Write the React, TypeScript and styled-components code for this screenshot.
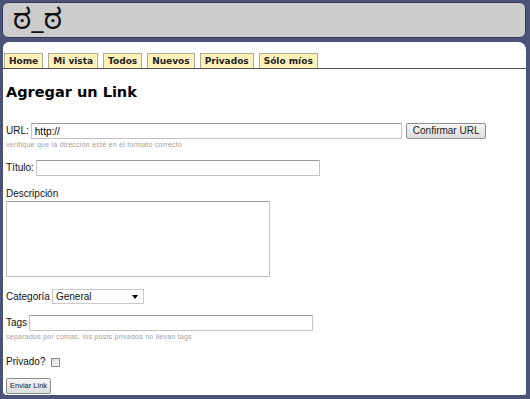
import styled, { createGlobalStyle } from 'styled-components';

const GlobalStyle = createGlobalStyle`
  html, body {
    margin: 0;
    padding: 0;
    background: #4b5478;
    width: 530px;
    height: 399px;
    overflow: hidden;
  }
`;

const Page = styled.div`
  padding: 2px 4px 0 2px;
  display: flex;
  flex-direction: column;
  gap: 4px;
`;

const Header = styled.div`
  height: 36px;
  background: #cccccc;
  border: 1px solid #2f3552;
  border-radius: 6px;
  display: flex;
  align-items: flex-start;
  padding-left: 10px;
  box-sizing: border-box;
`;

const Face = styled.span`
  font-family: 'Noto Sans Kannada', 'Noto Sans', 'DejaVu Sans', sans-serif;
  font-size: 28px;
  line-height: 20px;
  color: #111;
  margin-top: 12px;
`;

const Panel = styled.div`
  height: 353px;
  background: #fff;
  border-radius: 6px 8px 2px 4px;
  margin-left: 1px;
  box-sizing: border-box;
  padding-top: 11px;
  overflow: hidden;
`;

const TabBar = styled.ul`
  list-style: none;
  margin: 0;
  padding: 0 0 0 1px;
  display: flex;
  gap: 5px;
  border-bottom: 1px solid #555;
  height: 15px;
`;

const Tab = styled.li`
  font-family: 'DejaVu Sans', Verdana, sans-serif;
  font-weight: bold;
  font-size: 9px;
  color: #222;
  background: #fff2b8;
  border: 1px solid #b0ab95;
  border-bottom: none;
  padding: 0 4px;
  height: 15px;
  line-height: 15px;
  box-sizing: border-box;
`;

const Content = styled.div`
  padding: 0 4px 0 3px;
  font-family: 'Liberation Sans', Arial, sans-serif;
  font-size: 10px;
  color: #111;
`;

const Title = styled.h1`
  font-family: 'DejaVu Sans', Verdana, sans-serif;
  font-size: 14.5px;
  font-weight: bold;
  margin: 14px 0 0 0;
  line-height: 18px;
  color: #000;
`;

const Field = styled.div<{ $top: number }>`
  margin-top: ${(p) => p.$top}px;
`;

const Row = styled.div`
  display: flex;
  align-items: center;
  gap: 2px;
`;

const Label = styled.label`
  display: block;
  font-size: 10px;
  line-height: 12px;
`;

const TextInput = styled.input<{ $w: number }>`
  width: ${(p) => p.$w}px;
  height: 16px;
  box-sizing: border-box;
  border: 1px solid #c4c4c4;
  border-top-color: #9a9a9a;
  font-family: 'Liberation Sans', Arial, sans-serif;
  font-size: 10px;
  padding: 0 3px;
  margin: 0;
  outline: none;
`;

const Button = styled.button<{ $small?: boolean }>`
  font-family: 'Liberation Sans', Arial, sans-serif;
  font-size: ${(p) => (p.$small ? 7.5 : 10)}px;
  height: 16px;
  padding: 0 ${(p) => (p.$small ? 3 : 6)}px;
  margin: 0 0 0 ${(p) => (p.$small ? 0 : 2)}px;
  color: #222;
  background: linear-gradient(#f6f6f6, #dcdcdc);
  border: 1px solid #8f8f8f;
  border-radius: 2px;
  line-height: 1;
`;

const Hint = styled.div`
  font-size: 7px;
  color: #a0a0a0;
  line-height: 10px;
  margin-top: 1px;
  letter-spacing: 0.25px;
`;

const TextArea = styled.textarea`
  display: block;
  width: 264px;
  height: 76px;
  box-sizing: border-box;
  border: 1px solid #c4c4c4;
  border-top-color: #9a9a9a;
  margin: 1px 0 0;
  resize: none;
  outline: none;
`;

const SelectBox = styled.div`
  width: 92px;
  height: 15px;
  box-sizing: border-box;
  border: 1px solid #c8c8c8;
  display: flex;
  align-items: center;
  justify-content: space-between;
  padding: 0 5px 0 3px;
  font-size: 10px;
`;

const Arrow = styled.span`
  width: 0;
  height: 0;
  border-left: 3px solid transparent;
  border-right: 3px solid transparent;
  border-top: 4px solid #000;
`;

const Check = styled.span`
  width: 9px;
  height: 9px;
  box-sizing: border-box;
  border: 1px solid #8a8a8a;
  background: linear-gradient(135deg, #dcdcdc, #fafafa);
  margin-left: 4px;
`;

const tabs = ['Home', 'Mi vista', 'Todos', 'Nuevos', 'Privados', 'Sólo míos'];

const App = () => (
  <Page>
    <GlobalStyle />
    <Header>
      <Face>ಠ_ಠ</Face>
    </Header>
    <Panel>
      <TabBar>
        {tabs.map((t) => (
          <Tab key={t}>{t}</Tab>
        ))}
      </TabBar>
      <Content>
        <Title>Agregar un Link</Title>
        <Field $top={22}>
          <Row>
            <Label>URL:</Label>
            <TextInput $w={371} defaultValue="http://" />
            <Button>Confirmar URL</Button>
          </Row>
          <Hint>verifique que la dirección esté en el formato correcto</Hint>
        </Field>
        <Field $top={10}>
          <Row>
            <Label>Título:</Label>
            <TextInput $w={284} />
          </Row>
        </Field>
        <Field $top={12}>
          <Label>Descripción</Label>
          <TextArea />
        </Field>
        <Field $top={12}>
          <Row>
            <Label>Categoría</Label>
            <SelectBox>
              General
              <Arrow />
            </SelectBox>
          </Row>
        </Field>
        <Field $top={11}>
          <Row>
            <Label>Tags</Label>
            <TextInput $w={284} />
          </Row>
          <Hint>separados por comas, los posts privados no llevan tags</Hint>
        </Field>
        <Field $top={14}>
          <Row>
            <Label>Privado?</Label>
            <Check />
          </Row>
        </Field>
        <Field $top={10}>
          <Button $small>Enviar Link</Button>
        </Field>
      </Content>
    </Panel>
  </Page>
);

export default App;
